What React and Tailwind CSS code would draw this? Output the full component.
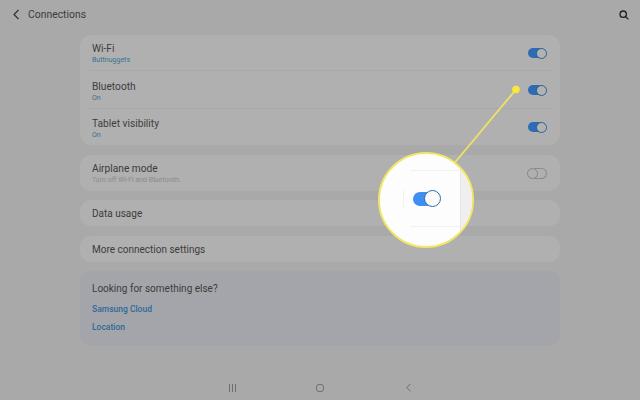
import React from "react";

function Toggle({ on = true }) {
  if (on) {
    return (
      <div className="relative w-[19px] h-[11px] shrink-0">
        <div className="absolute left-0 top-[0.5px] w-[16px] h-[10px] rounded-full bg-[#2f6bb5]" />
        <div className="absolute right-0 top-0 w-[11px] h-[11px] rounded-full bg-[#b2b2b2] border border-[#2f5f96]" />
      </div>
    );
  }
  return (
    <div className="relative w-[20px] h-[11px] shrink-0">
      <div className="absolute left-0 top-0 w-[11px] h-[11px] rounded-full border border-[#858585]" />
      <div className="absolute right-0 top-0 w-[12px] h-[11px] rounded-r-full border border-l-0 border-[#8a8a8a]" />
    </div>
  );
}

function Row({ title, sub, subClass = "text-[#35708f]", divider, toggle, h, pt }) {
  return (
    <div className={`relative flex items-center justify-between pl-[12px] pr-[13px] ${h}`}>
      <div className={`flex flex-col ${pt}`}>
        <div className="text-[10.2px] leading-[13px] text-[#3c3c3c]">{title}</div>
        {sub && <div className={`text-[7px] leading-[9px] mt-[1px] ${subClass}`}>{sub}</div>}
      </div>
      {toggle}
      {divider && <div className="absolute bottom-0 left-[10px] right-[8px] h-px bg-[#a9a9a9]" />}
    </div>
  );
}

export default function App() {
  return (
    <div className="relative w-[640px] h-[400px] overflow-hidden bg-[#a9a9a9] font-['Roboto',sans-serif] flex flex-col">
      <header className="h-[35px] shrink-0 flex items-center justify-between pl-[12px] pr-[11px] pb-[6px]">
        <div className="flex items-center gap-[8px]">
          <svg width="8" height="11" viewBox="0 0 8 11" fill="none" stroke="#333" strokeWidth="1.2">
            <path d="M6.5 1 L2 5.5 L6.5 10" />
          </svg>
          <span className="text-[10.4px] text-[#3c3c3c]">Connections</span>
        </div>
        <svg width="10" height="10" viewBox="0 0 10 10" fill="none" stroke="#222" strokeWidth="1.3">
          <circle cx="4.2" cy="4.2" r="3.2" />
          <path d="M6.6 6.6 L9.4 9.4" />
        </svg>
      </header>

      <main className="mx-[80px] w-[480px] flex flex-col">
        <section className="rounded-[11px] bg-[#b0b0b0] h-[110px] flex flex-col">
          <Row title="Wi-Fi" sub="Buttnuggets" divider h="h-[36px]" pt="pt-0" toggle={<Toggle />} />
          <Row title="Bluetooth" sub="On" divider h="h-[38px]" pt="pt-[2px]" toggle={<Toggle />} />
          <Row title="Tablet visibility" sub="On" h="h-[36px]" pt="pt-[2px]" toggle={<Toggle />} />
        </section>
        <section className="mt-[10px] rounded-[11px] bg-[#b0b0b0] h-[36px] flex flex-col">
          <Row title="Airplane mode" sub="Turn off Wi-Fi and Bluetooth." subClass="text-[#8b8b8b]" h="h-[36px]" pt="pt-0" toggle={<Toggle on={false} />} />
        </section>
        <section className="mt-[9px] rounded-[11px] bg-[#b0b0b0] h-[26px] flex items-center pl-[12px] text-[10px] text-[#3c3c3c]">
          Data usage
        </section>
        <section className="mt-[10px] rounded-[11px] bg-[#b0b0b0] h-[26px] flex items-center pl-[12px] text-[10px] text-[#3c3c3c]">
          More connection settings
        </section>
        <section className="mt-[9px] rounded-[11px] bg-[#a4a5aa] h-[75px] pl-[12px] pt-[11px] flex flex-col">
          <div className="text-[10px] leading-[13px] text-[#3c3c3c]">Looking for something else?</div>
          <div className="mt-[9px] text-[8.5px] leading-[10px] font-medium text-[#2f6a96]">Samsung Cloud</div>
          <div className="mt-[8px] text-[8.5px] leading-[10px] font-medium text-[#2f6a96]">Location</div>
        </section>
      </main>

      <nav className="absolute bottom-[6px] left-0 w-full h-[12px]">
        <div className="absolute left-[228px] top-[2px]">
          <svg width="9" height="8" viewBox="0 0 9 8" fill="none" stroke="#6e6e6e" strokeWidth="1">
            <path d="M1.5 0V8M4.5 0V8M7.5 0V8" />
          </svg>
        </div>
        <div className="absolute left-[316px] top-[2px] w-[8px] h-[8px] rounded-[3px] border border-[#6e6e6e]" />
        <div className="absolute left-[405px] top-[1px]">
          <svg width="7" height="9" viewBox="0 0 7 9" fill="none" stroke="#6e6e6e" strokeWidth="1">
            <path d="M5.5 0.8L1.8 4.5L5.5 8.2" />
          </svg>
        </div>
      </nav>

      {/* Callout overlay */}
      <svg className="absolute left-0 top-0 pointer-events-none" width="640" height="400" viewBox="0 0 640 400" fill="none">
        <path d="M516 89.5 L452 166" stroke="#f0e264" strokeWidth="1.8" />
        <circle cx="516" cy="89.5" r="3.8" fill="#f9e83a" />
      </svg>
      <div className="absolute left-[378px] top-[152px] w-[96px] h-[96px] rounded-full bg-[#fdfdfd] border-[2px] border-[#f1e766] overflow-hidden">
        <div className="absolute right-0 top-0 h-full w-[12px] bg-[#efefef] border-l border-[#e4e4e4]" />
        <div className="absolute left-[30px] top-[16px] w-[50px] h-px bg-[#f1f1f1]" />
        <div className="absolute left-[30px] top-[72px] w-[50px] h-px bg-[#f1f1f1]" />
        <div className="absolute left-[23px] top-[36px] w-px h-[17px] bg-[#f1f1f1]" />
        <div className="absolute left-[33px] top-[38px] w-[26px] h-[14px] rounded-full bg-[#3f8ff0]" />
        <div className="absolute left-[44px] top-[36px] w-[17px] h-[17px] rounded-full bg-[#fbfbfb] border-[1.5px] border-[#2f6ba8]" />
      </div>
    </div>
  );
}
